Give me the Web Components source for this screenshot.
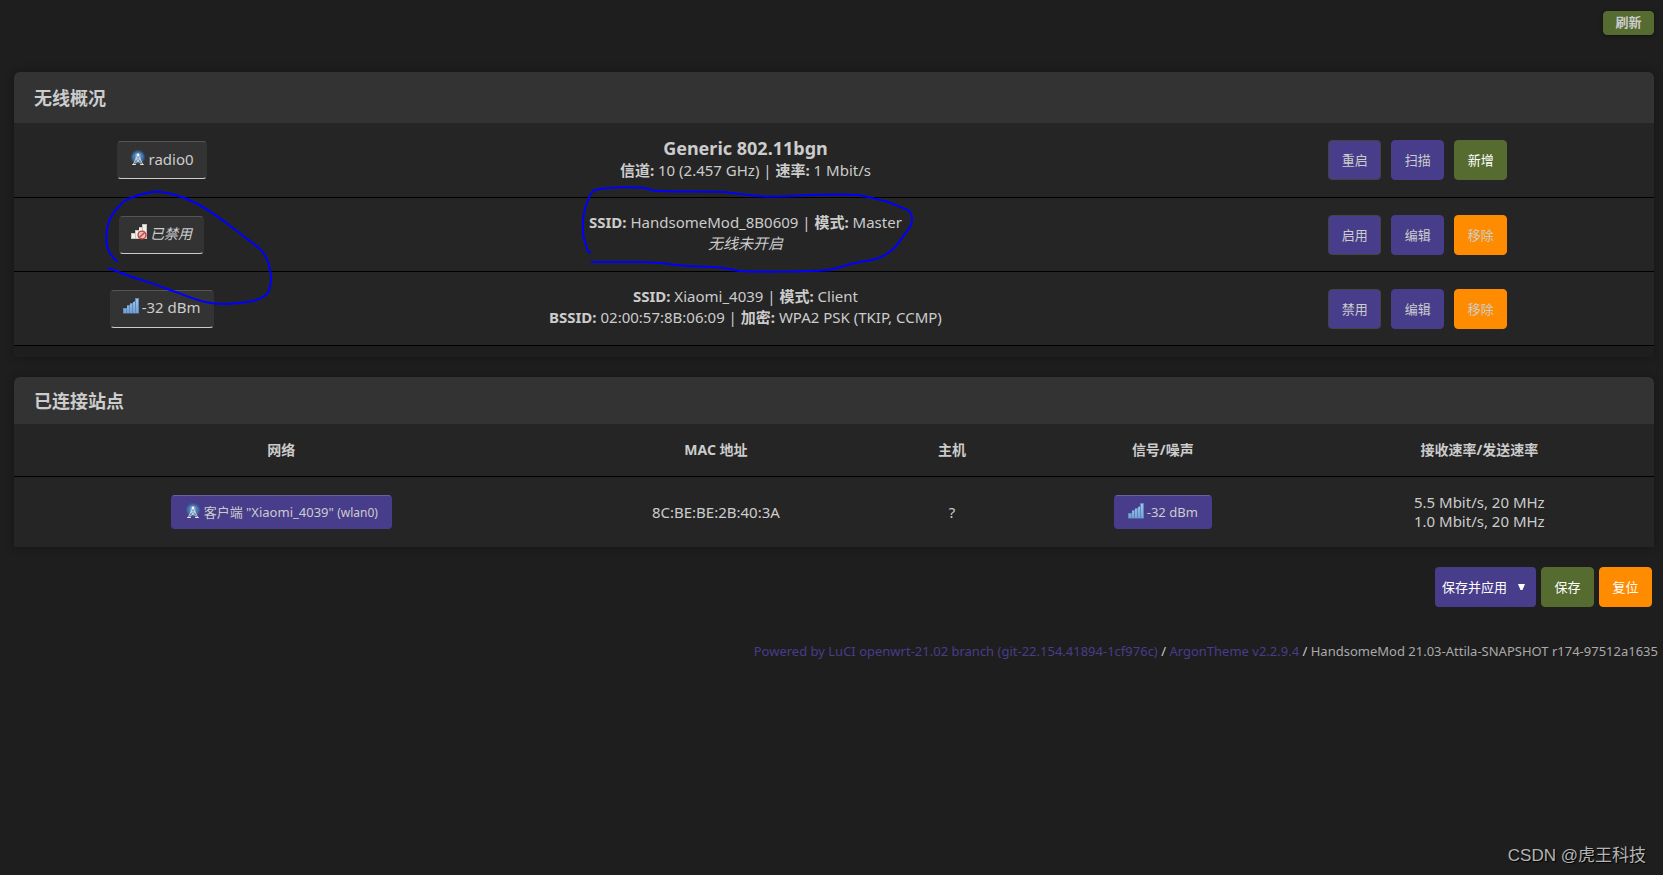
<!DOCTYPE html>
<html lang="zh-CN">
<head>
<meta charset="utf-8">
<title>无线概况</title>
<style>
  html { background: #1e1e1e; }
  body {
    margin: 0;
    color: #ccc;
    font-family: "Noto Sans", "Noto Sans CJK SC", sans-serif;
    font-size: 15px;
    line-height: 21px;
  }
</style>
</head>
<body>
<wireless-page></wireless-page>

<script>
const define = (name, html) => {
  const template = document.createElement('template');
  template.innerHTML = html;
  customElements.define(name, class extends HTMLElement {
    constructor() {
      super();
      this.attachShadow({ mode: 'open' }).append(template.content.cloneNode(true));
    }
  });
};

/* ---------- icons ---------- */
define('icon-antenna', `
  <style>:host { display: inline-block; width: 16px; height: 16px; } svg { display: block; }</style>
  <svg width="16" height="16" viewBox="0 0 16 16" aria-hidden="true">
    <circle cx="8" cy="7" r="7.2" fill="#3c6ca8" opacity=".4"/>
    <circle cx="8" cy="7" r="5.8" fill="#4677b4" opacity=".9"/>
    <circle cx="8" cy="6.500" r="3.4" fill="#6b98cc"/>
    <path d="M7.500 5.500 3.500 14M8.500 5.500l4 8.500M6.300 8.800h3.400M6 9.400l5.200 4M10 9.400l-5.200 4" fill="none" stroke="#dedfd8" stroke-width=".9"/>
    <path d="M2.300 14.500h3.500M10.200 14.500h3.500" stroke="#eeeee8" stroke-width="1.1"/>
    <circle cx="8" cy="5" r="1.4" fill="#f2f2ee"/>
  </svg>`);

define('icon-signal', `
  <style>:host { display: inline-block; width: 16px; height: 16px; } svg { display: block; }</style>
  <svg width="16" height="16" viewBox="0 0 16 16" aria-hidden="true">
    <defs><linearGradient id="g" x2="0" y2="1"><stop stop-color="#a4c4e6"/><stop offset="1" stop-color="#73a0d2"/></linearGradient></defs>
    <path d="M0 15.500V10h4V7h3V5h4V3h1V0h4v15.500z" fill="#5b89c0"/>
    <path d="M1 11h2v4H1zM4 8h2v7H4zM7 6h2v9H7zM10 4h2v11h-2zM13 1h2v14h-2z" fill="url(#g)"/>
  </svg>`);

define('icon-signal-off', `
  <style>:host { display: inline-block; width: 16px; height: 16px; } svg { display: block; }</style>
  <svg width="16" height="16" viewBox="0 0 16 16" aria-hidden="true">
    <path d="M0 15V9h4V6h4V3h3V0h5v15z" fill="#c6c5be"/>
    <path d="M1 10h3v4H1zM5 7h2v7H5zM8 4h3v10H8zM12 1h3v13h-3z" fill="#f1f1ec"/>
    <circle cx="11" cy="11" r="3.900" fill="#e3c4c1" stroke="#c24444" stroke-width="1.4"/>
    <path d="m8.400 13.600 5.200-5.200" stroke="#c24444" stroke-width="1.4"/>
  </svg>`);

/* ---------- controls ---------- */
define('argon-button', `
  <style>
    :host { display: inline-block; }
    button {
      box-sizing: border-box; display: block; width: 53px; height: 40px; margin: 0;
      padding: 0; border: 1px solid var(--edge, var(--fill, #483d8b)); border-radius: 4px;
      background: var(--fill, #483d8b); color: var(--ink, #ccc);
      font: inherit; font-size: 13px; line-height: 20px; cursor: pointer;
    }
    :host([kind="outlined"]) button { --edge: #444; }
    :host([kind="add"]) button { --fill: #556b2f; --ink: #fff; }
    :host([kind="remove"]) button { --fill: #ff8c00; }
    :host([kind="reset"]) button { --fill: #ff8c00; --ink: #fff; }
    :host([kind="refresh"]) button {
      --fill: #556b2f; width: 51px; height: 24px; padding-bottom: 2px; font-weight: 700;
      box-shadow: 0 1px 4px rgba(0,0,0,.4);
    }
  </style>
  <button type="button"><slot></slot></button>`);

define('apply-select', `
  <style>
    :host { display: inline-grid; grid-template: 40px / 101px; align-items: center; }
    select, svg { grid-area: 1 / 1; }
    select {
      appearance: none; width: 100%; height: 40px; padding: 0 7px; border: 0; border-radius: 4px;
      background: #483d8b; color: #fff; font: inherit; font-size: 13px; cursor: pointer;
    }
    svg { justify-self: end; margin-right: 11px; pointer-events: none; }
  </style>
  <select aria-label="保存并应用">
    <option>保存并应用</option>
  </select>
  <svg width="7" height="6" viewBox="0 0 7 6" aria-hidden="true"><path d="M0 0h7L4.500 6h-2z" fill="#fff"/></svg>`);

define('iface-badge', `
  <style>
    :host {
      box-sizing: border-box; display: inline-flex; align-items: center; gap: 3px; height: 38px;
      padding: 0 12px 2px; border: 1px solid #333; border-top-color: #555; border-bottom-color: #ccc;
      border-radius: 4px; background: #333; white-space: nowrap;
    }
    :host([tone="off"]) { padding: 0 11px 2px; font-size: 14px; }
    :host([tone="accent"]) {
      height: 34px; padding: 0 13px; font-size: 13px;
      border-color: #483d8b; border-top-color: #6a619f; background: #483d8b;
    }
    ::slotted(:first-child) { margin-bottom: 3px; }
  </style>
  <slot></slot>`);

define('argon-card', `
  <style>
    :host { display: block; border-radius: 6px 6px 0 0; box-shadow: 0 0 10px rgba(0,0,0,.3); }
    h3 {
      margin: 0; padding: 13px 20px 12px; border-radius: 6px 6px 0 0; background: #333;
      font-size: 18px; line-height: 26px; font-weight: 700;
    }
    :host([compact]) h3 { padding: 11px 20px 10px; }
  </style>
  <h3><slot name="title"></slot></h3>
  <slot></slot>`);

/* ---------- hand-drawn marks ---------- */
define('ink-left', `
  <style>:host { position: absolute; left: -18px; top: -29px; pointer-events: none; } svg { display: block; }</style>
  <svg width="176" height="122" viewBox="102 187 176 122" aria-hidden="true">
    <path d="M118.500 262C114 258 110 252 108.500 248C106.500 241 107 231 110 221C113 213 119 207 124 202C131 197 146 192.500 158 191.500C169 192 178 196 187 198.500C207 207 219 217 230 225C239 232 251 241 260 248C268 255 271 266 272 277C272 286 270 292 267 295C262 299 256 301 248 302C236 304 219 305 206 302C193 299 181 293 168 289C157 284 145 281 136 278C127 275 118 271 109 268" fill="none" stroke="#00f" stroke-width="2" stroke-linejoin="round"/>
  </svg>`);

define('ink-center', `
  <style>:host { position: absolute; left: calc(50% - 168px); top: -30px; pointer-events: none; } svg { display: block; }</style>
  <svg width="340" height="96" viewBox="578 183 340 96" aria-hidden="true">
    <path d="M592 253.500L589 252.500L586 243C583 236 583.500 222 585 214C586 207 588 204 590 199C592 193 594 191 600 190C615 188 632 188 645 189C651 190 653 192 660 192C685 193 705 192 725 193C740 195 752 197 771 197.500C800 197 835 194 860 196C870 198 877 200 886 202C895 205 903 209 909 211C914 215 914 222 911 228C906 235 902 240 898 246C892 253 886 257 877 260C869 262 864 262 856 264C846 266 838 270 828 271C805 273 760 273 741 272C730 270 724 269 716 268C703 267 692 268 678 266C664 264 655 263 640 263H592" fill="none" stroke="#00f" stroke-width="2" stroke-linejoin="round"/>
  </svg>`);

/* ---------- sections ---------- */
define('wireless-overview', `
  <style>
    :host { display: block; padding-bottom: 11px; }
    table { width: 100%; border-collapse: separate; border-spacing: 0; table-layout: fixed; background: #252525; }
    td { box-sizing: border-box; height: 74px; padding: 0; border-bottom: 1px solid #000; text-align: center; vertical-align: middle; line-height: 21px; }
    tr:first-child td { height: 75px; }
    td:nth-child(2) { padding-bottom: 3px; }
    .device { width: 18%; }
    .actions { width: 28.8%; }
    .name { display: block; font-size: 18px; line-height: 24px; }
    .anchor { position: relative; }
    span.anchor { display: inline-block; vertical-align: middle; }
    iface-badge { vertical-align: middle; }
    .buttons { display: flex; justify-content: center; gap: 10px; }
  </style>
  <table>
    <colgroup><col class="device"><col><col class="actions"></colgroup>
    <tbody>
    <tr>
      <td><iface-badge><icon-antenna></icon-antenna><span>radio0</span></iface-badge></td>
      <td><strong class="name">Generic 802.11bgn</strong><strong>信道:</strong> 10 (2.457 GHz) | <strong>速率:</strong> 1 Mbit/s</td>
      <td><div class="buttons"><argon-button kind="outlined">重启</argon-button><argon-button>扫描</argon-button><argon-button kind="add">新增</argon-button></div></td>
    </tr>
    <tr>
      <td><span class="anchor"><iface-badge tone="off"><icon-signal-off></icon-signal-off><em>已禁用</em></iface-badge><ink-left></ink-left></span></td>
      <td><div class="anchor"><strong>SSID:</strong> HandsomeMod_8B0609 | <strong>模式:</strong> Master<br><em>无线未开启</em><ink-center></ink-center></div></td>
      <td><div class="buttons"><argon-button kind="outlined">启用</argon-button><argon-button>编辑</argon-button><argon-button kind="remove">移除</argon-button></div></td>
    </tr>
    <tr>
      <td><iface-badge><icon-signal></icon-signal><span>-32 dBm</span></iface-badge></td>
      <td><strong>SSID:</strong> Xiaomi_4039 | <strong>模式:</strong> Client<br><strong>BSSID:</strong> 02:00:57:8B:06:09 | <strong>加密:</strong> WPA2 PSK (TKIP, CCMP)</td>
      <td><div class="buttons"><argon-button kind="outlined">禁用</argon-button><argon-button>编辑</argon-button><argon-button kind="remove">移除</argon-button></div></td>
    </tr>
    </tbody>
  </table>`);

define('station-list', `
  <style>
    :host { display: block; }
    table { width: 100%; border-collapse: separate; border-spacing: 0; table-layout: fixed; background: #252525; }
    th, td { box-sizing: border-box; padding: 0; text-align: center; vertical-align: middle; line-height: 19px; }
    th { height: 53px; padding-bottom: 2px; border-bottom: 1px solid #000; font-weight: 700; font-size: 14px; }
    td { height: 70px; }
    .network { width: 32.6%; } .mac { width: 20.4%; } .host { width: 8.4%; } .signal { width: 17.3%; }
    iface-badge { vertical-align: middle; }
    small { font-size: 12px; }
  </style>
  <table>
    <colgroup><col class="network"><col class="mac"><col class="host"><col class="signal"><col></colgroup>
    <thead><tr><th>网络</th><th>MAC 地址</th><th>主机</th><th>信号/噪声</th><th>接收速率/发送速率</th></tr></thead>
    <tbody><tr>
      <td><iface-badge tone="accent"><icon-antenna></icon-antenna><span>客户端 "Xiaomi_4039" <small>(wlan0)</small></span></iface-badge></td>
      <td>8C:BE:BE:2B:40:3A</td>
      <td>?</td>
      <td><iface-badge tone="accent"><icon-signal></icon-signal><span>-32 dBm</span></iface-badge></td>
      <td>5.5 Mbit/s, 20 MHz<br>1.0 Mbit/s, 20 MHz</td>
    </tr></tbody>
  </table>`);

define('page-footer', `
  <style>
    :host { display: block; padding: 0 5px; text-align: right; font-size: 13px; line-height: 20px; color: #aaa; }
    a { color: #483d8b; text-decoration: none; }
    span { color: #ccc; }
  </style>
  <a href="#luci">Powered by LuCI openwrt-21.02 branch (git-22.154.41894-1cf976c)</a> <span>/</span>
  <a href="#argon">ArgonTheme v2.2.9.4</a> <span>/</span> HandsomeMod 21.03-Attila-SNAPSHOT r174-97512a1635`);

define('wireless-page', `
  <style>
    :host { box-sizing: border-box; display: flex; flex-direction: column; min-height: 100vh; padding: 11px 0 6px; }
    header { display: flex; justify-content: flex-end; padding: 0 9px; }
    main { display: flex; flex-direction: column; gap: 20px; padding: 37px 9px 0 14px; }
    .actions { display: flex; justify-content: flex-end; gap: 5px; padding-right: 2px; }
    page-footer { margin-top: 34px; }
    .mark { margin-top: auto; padding-right: 17px; text-align: right; font-family: "Liberation Sans", "Noto Sans CJK SC", sans-serif; font-size: 17px; line-height: 26px; color: #b4b4b4; text-shadow: 1px 1px 1px #000; }
  </style>
  <header><argon-button kind="refresh">刷新</argon-button></header>
  <main>
    <argon-card><span slot="title">无线概况</span><wireless-overview></wireless-overview></argon-card>
    <argon-card compact><span slot="title">已连接站点</span><station-list></station-list></argon-card>
    <div class="actions">
      <apply-select></apply-select>
      <argon-button kind="add">保存</argon-button>
      <argon-button kind="reset">复位</argon-button>
    </div>
  </main>
  <page-footer></page-footer>
  <div class="mark">CSDN @虎王科技</div>`);
</script>
</body>
</html>
